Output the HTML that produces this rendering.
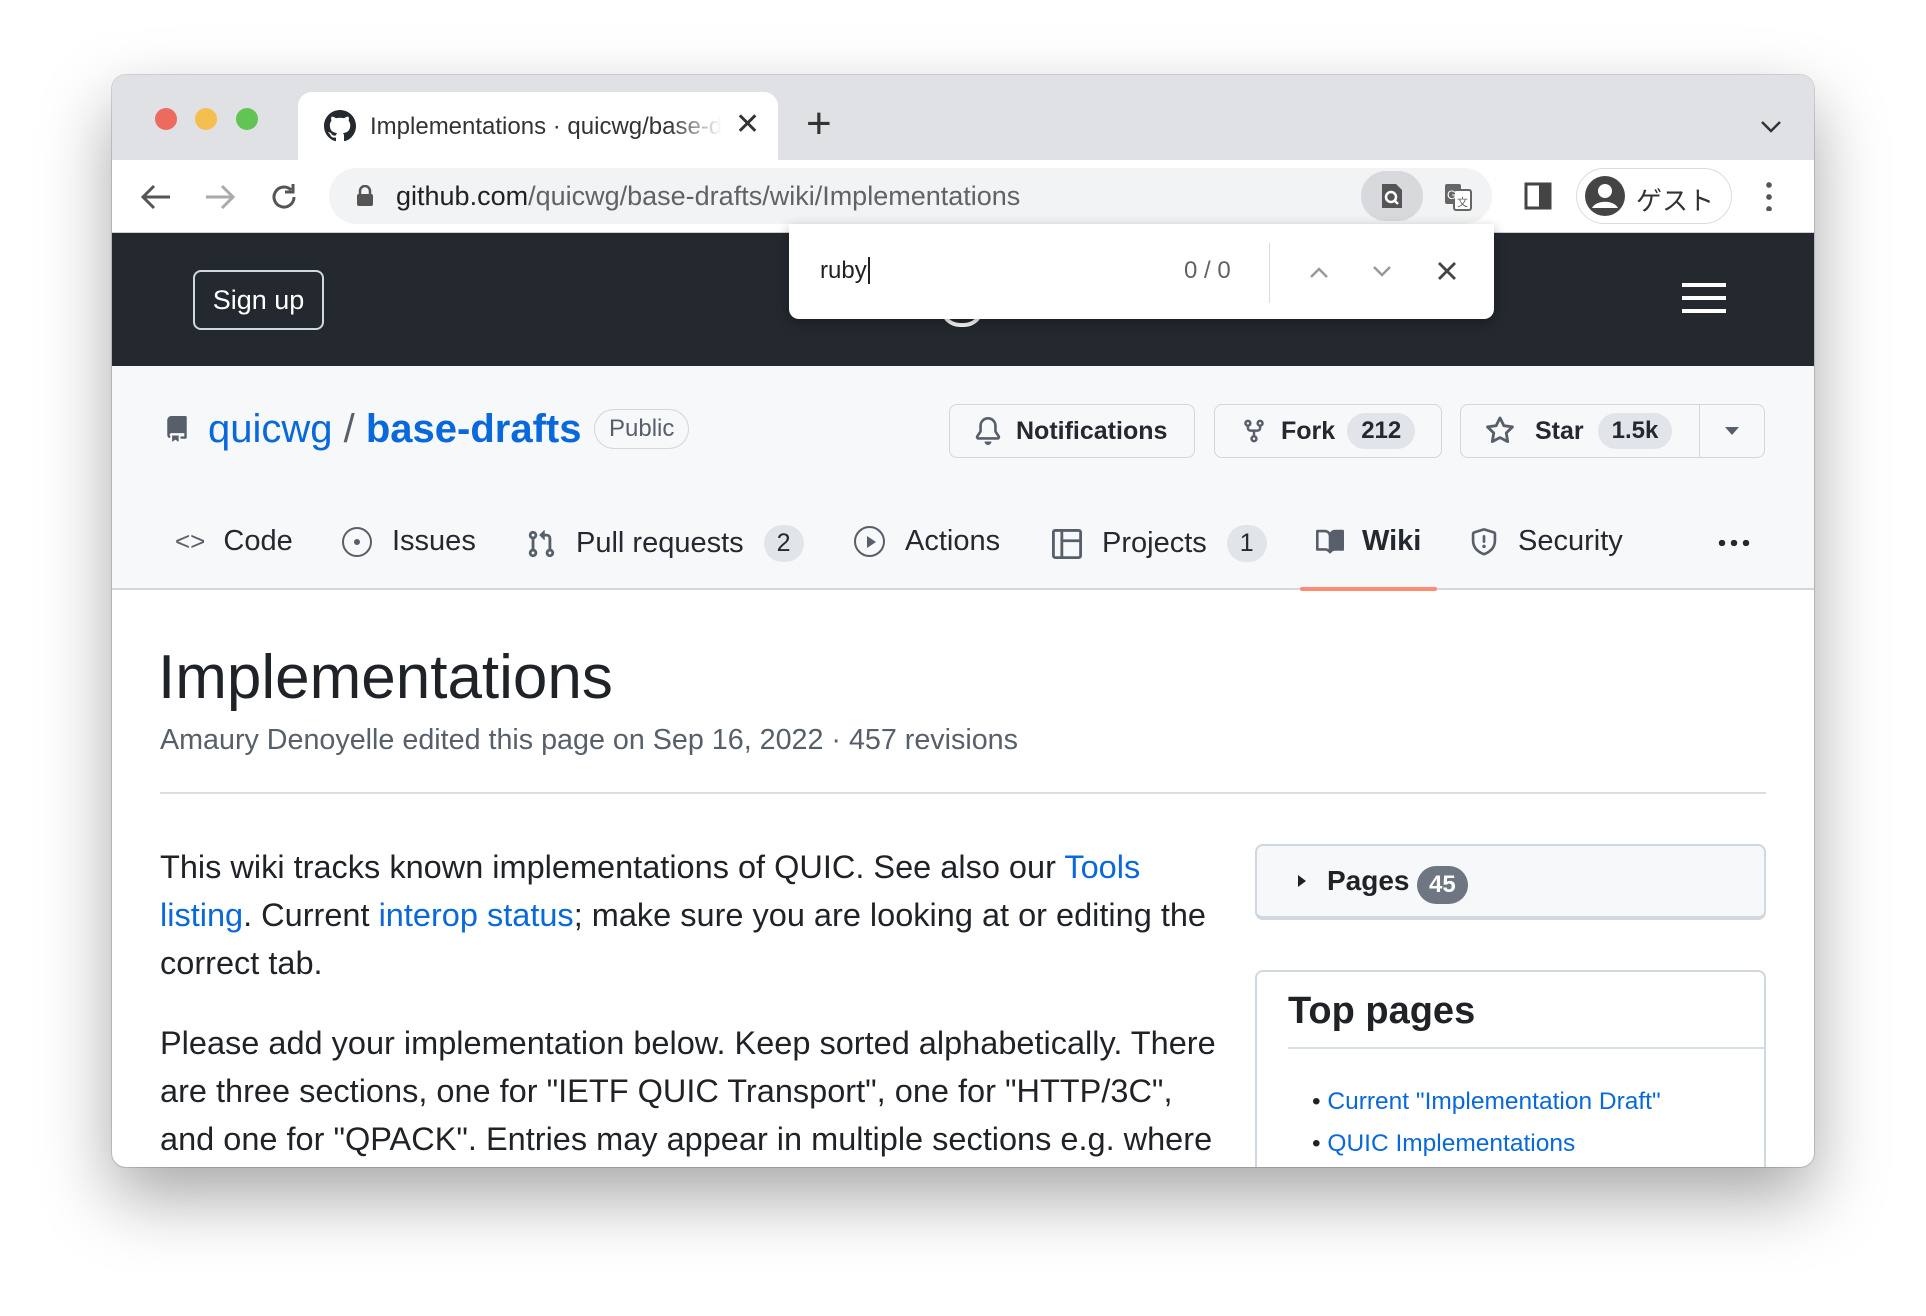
<!DOCTYPE html>
<html><head><meta charset="utf-8"><style>
*{box-sizing:border-box;margin:0;padding:0}
body{width:1926px;height:1316px;background:#fff;font-family:"Liberation Sans","Noto Sans CJK JP",sans-serif;position:relative;overflow:hidden}
.win{position:absolute;left:112px;top:75px;width:1702px;height:1092px;border-radius:14px;overflow:hidden;background:#fff;box-shadow:0 30px 70px rgba(0,0,0,.35),0 0 0 1px rgba(0,0,0,.15)}
.abs{position:absolute}
.tabbar{left:0;top:0;width:1702px;height:85px;background:#dfe1e5}
.tab{left:186px;top:17px;width:480px;height:68px;background:#fff;border-radius:14px 14px 0 0}
.light{width:22px;height:22px;border-radius:50%;top:33px}
.toolbar{left:0;top:85px;width:1702px;height:73px;background:#fff;border-bottom:1px solid #d0d0d0}
.url{left:217px;top:93px;width:1163px;height:56px;border-radius:28px;background:#f1f3f4}
.hdr{left:0;top:158px;width:1702px;height:133px;background:#24292f}
.repo{left:0;top:291px;width:1702px;height:224px;background:#f6f8fa;border-bottom:2px solid #d0d7de}
.btn{top:329px;height:54px;border:1px solid #d0d7de;border-radius:8px;background:#f6f8fa;font-size:25px;color:#24292f;display:flex;align-items:center;font-weight:bold}
.cnt{background:#e1e4e8;border-radius:20px;padding:4px 14px;font-size:24px}
.nav{top:450px;font-size:29px;color:#24292f;display:flex;align-items:center}
.ic{position:absolute}
a{color:#0969da;text-decoration:none}
.p{left:48px;width:1058px;font-size:32.5px;line-height:48px;color:#1f2328}
</style></head><body>
<div class="win">
 <div class="abs tabbar"></div>
 <div class="abs light" style="left:43px;background:#ed6a5e"></div>
 <div class="abs light" style="left:83px;background:#f5bf4f"></div>
 <div class="abs light" style="left:124px;background:#61c554"></div>
 <div class="abs tab"></div>
 <svg class="ic" style="left:212px;top:35px" width="32" height="32" viewBox="0 0 16 16"><path fill="#24292f" d="M8 0C3.58 0 0 3.580 0 8c0 3.54 2.29 6.53 5.47 7.59.4.07.55-.17.55-.38 0-.19-.01-.82-.01-1.49-2.01.37-2.53-.49-2.690-.94-.09-.23-.48-.94-.82-1.130-.28-.15-.68-.52-.01-.53.63-.01 1.08.58 1.23.82.72 1.21 1.87.87 2.33.66.07-.52.28-.87.51-1.07-1.78-.2-3.64-.89-3.64-3.95 0-.87.31-1.59.82-2.15-.08-.2-.36-1.02.08-2.12 0 0 .67-.21 2.2.82.64-.18 1.32-.27 2-.27.68 0 1.36.09 2 .27 1.53-1.04 2.2-.82 2.2-.82.44 1.1.16 1.92.08 2.12.51.56.82 1.27.82 2.15 0 3.07-1.87 3.75-3.65 3.95.29.25.54.73.54 1.48 0 1.07-.01 1.93-.01 2.2 0 .21.15.46.55.38A8.013 8.013 0 0016 8c0-4.42-3.58-8-8-8z"/></svg>
 <div class="abs" style="left:258px;top:38px;font-size:24px;color:#333;width:352px;white-space:nowrap;overflow:hidden;-webkit-mask-image:linear-gradient(90deg,#000 85%,transparent)">Implementations · quicwg/base-drafts</div>
 <div class="abs" style="left:623px;top:32px;font-size:30px;color:#333">✕</div>
 <div class="abs" style="left:694px;top:24px;font-size:44px;color:#333;font-weight:300">+</div>
 <svg class="ic" style="left:1648px;top:45px" width="22" height="14" viewBox="0 0 22 14"><path d="M2 2l9 9 9-9" stroke="#333" stroke-width="2.5" fill="none"/></svg>
 <div class="abs toolbar"></div>
 <svg class="ic" style="left:28px;top:108px" width="32" height="28" viewBox="0 0 32 28"><path d="M30 14H4M14 3L3 14l11 11" stroke="#555" stroke-width="3" fill="none"/></svg>
 <svg class="ic" style="left:92px;top:108px" width="32" height="28" viewBox="0 0 32 28"><path d="M2 14h26M18 3l11 11-11 11" stroke="#aaa" stroke-width="3" fill="none"/></svg>
 <svg class="ic" style="left:156px;top:106px" width="32" height="32" viewBox="0 0 32 32"><path d="M26 16a10 10 0 1 1-3-7.1" stroke="#555" stroke-width="3" fill="none"/><path d="M25 3v8h-8" stroke="#555" stroke-width="3" fill="none"/></svg>
 <div class="abs url"></div>
 <svg class="ic" style="left:244px;top:110px" width="18" height="22" viewBox="0 0 18 22"><rect x="1" y="9" width="16" height="12" rx="2" fill="#555"/><path d="M4 9V6a5 5 0 0 1 10 0v3" stroke="#555" stroke-width="2.5" fill="none"/></svg>
 <div class="abs" style="left:284px;top:106px;font-size:27px;color:#202124">github.com<span style="color:#5f6368">/quicwg/base-drafts/wiki/Implementations</span></div>
 <div class="abs" style="left:1249px;top:96px;width:62px;height:50px;border-radius:25px;background:#d7d9dc"></div>
 <svg class="ic" style="left:1268px;top:108px" width="24" height="26" viewBox="0 0 24 26"><path d="M2 1h14l6 6v18H2z" fill="#555"/><circle cx="11" cy="14" r="5" stroke="#fff" stroke-width="2.5" fill="none"/><path d="M14 17l4 4" stroke="#fff" stroke-width="2.5"/></svg>
 <svg class="ic" style="left:1332px;top:108px" width="28" height="28" viewBox="0 0 28 28"><rect x="1" y="1" width="16" height="20" rx="2" fill="#666"/><rect x="10" y="7" width="17" height="20" rx="2" fill="#fff" stroke="#666" stroke-width="2"/><text x="3" y="16" font-size="12" fill="#fff" font-family="Liberation Sans">G</text><text x="13" y="23" font-size="11" fill="#666">文</text></svg>
 <svg class="ic" style="left:1412px;top:107px" width="28" height="28" viewBox="0 0 28 28"><rect x="2" y="2" width="24" height="24" stroke="#444" stroke-width="3" fill="none"/><rect x="15" y="2" width="11" height="24" fill="#444"/></svg>
 <div class="abs" style="left:1464px;top:93px;width:156px;height:56px;border-radius:28px;border:1px solid #dadce0;background:#fff"></div>
 <svg class="ic" style="left:1472px;top:100px" width="42" height="42" viewBox="0 0 42 42"><circle cx="21" cy="21" r="20" fill="#444"/><circle cx="21" cy="16" r="7" fill="#fff"/><path d="M8 33a14 10 0 0 1 26 0" fill="#fff"/></svg>
 <div class="abs" style="left:1524px;top:106px;font-size:26px;color:#333">ゲスト</div>
 <div class="abs" style="left:1654px;top:104px;width:6px;height:32px;background:radial-gradient(circle,#555 2.6px,transparent 3px) 0 0/6px 12px"></div>

 <div class="abs hdr"></div>
 <div class="abs" style="left:81px;top:195px;width:131px;height:60px;border:2px solid #d0d7de;border-radius:8px;color:#fff;font-size:27px;display:flex;align-items:center;justify-content:center">Sign up</div>
 <div class="abs" style="left:1570px;top:208px;width:44px;height:4px;background:#fff;box-shadow:0 13px 0 #fff,0 26px 0 #fff"></div>
 <div class="abs" style="left:828px;top:232px;width:44px;height:20px;border-radius:0 0 22px 22px;border:4px solid #fff;border-top:none"></div>

 <div class="abs" style="left:677px;top:149px;width:705px;height:95px;background:#fff;border-radius:0 0 10px 10px;box-shadow:0 4px 12px rgba(0,0,0,.3)"></div>
 <div class="abs" style="left:708px;top:182px;font-size:24px;color:#202124">ruby<span style="border-left:2px solid #202124;margin-left:1px"></span></div>
 <div class="abs" style="left:1072px;top:182px;font-size:24px;color:#5f6368">0 / 0</div>
 <div class="abs" style="left:1157px;top:168px;width:1px;height:60px;background:#dadce0"></div>
 <svg class="ic" style="left:1196px;top:190px" width="22" height="14" viewBox="0 0 22 14"><path d="M3 12l8-8 8 8" stroke="#999" stroke-width="2.5" fill="none"/></svg>
 <svg class="ic" style="left:1259px;top:190px" width="22" height="14" viewBox="0 0 22 14"><path d="M3 2l8 8 8-8" stroke="#999" stroke-width="2.5" fill="none"/></svg>
 <svg class="ic" style="left:1324px;top:185px" width="22" height="22" viewBox="0 0 22 22"><path d="M3 3l16 16M19 3L3 19" stroke="#444" stroke-width="2.8"/></svg>

 <div class="abs repo"></div>
 <svg class="ic" style="left:52px;top:338px" width="26" height="32" viewBox="0 0 16 16"><path fill="#57606a" d="M2 2.5A2.5 2.5 0 014.5 0h8.75a.75.75 0 01.75.75v12.5a.75.75 0 01-.75.75h-2.5a.75.75 0 110-1.5h1.75v-2h-8a1 1 0 00-.714 1.7.75.75 0 01-1.072 1.050A2.495 2.495 0 012 11.5v-9zm10.5-1V9h-8c-.356 0-.694.074-1 .208V2.5a1 1 0 011-1h8zM5 12.25v3.25a.25.25 0 00.4.2l1.45-1.087a.25.25 0 01.3 0L8.6 15.7a.25.25 0 00.4-.2v-3.25a.25.25 0 00-.25-.25h-3.5a.25.25 0 00-.25.25z"/></svg>
 <div class="abs" style="left:96px;top:332px;font-size:40px;color:#0969da">quicwg <span style="color:#57606a">/</span> <b>base-drafts</b></div>
 <div class="abs" style="left:482px;top:334px;height:40px;padding:0 14px;border:1px solid #d0d7de;border-radius:20px;font-size:24px;color:#57606a;line-height:38px">Public</div>
 <div class="abs btn" style="left:837px;width:246px">
  <svg style="margin:0 14px 0 24px" width="28" height="30" viewBox="0 0 16 16"><path fill="#57606a" d="M8 16a2 2 0 001.985-1.75c.017-.137-.097-.25-.235-.25h-3.5c-.138 0-.252.113-.235.25A2 2 0 008 16zM3 5a5 5 0 0110 0v2.947c0 .05.015.098.042.139l1.703 2.555A1.519 1.519 0 0113.482 13H2.518a1.516 1.516 0 01-1.263-2.36l1.703-2.554A.255.255 0 003 7.947V5zm5-3.5A3.5 3.5 0 004.5 5v2.947c0 .346-.102.683-.294.97l-1.703 2.556a.017.017 0 00-.003.01l.001.006c0 .002.002.004.004.006l.006.004.007.001h10.964l.007-.001.006-.004.004-.006.001-.007a.017.017 0 00-.003-.01l-1.703-2.554a1.745 1.745 0 01-.294-.97V5A3.5 3.5 0 008 1.5z"/></svg>Notifications</div>
 <div class="abs btn" style="left:1102px;width:228px">
  <svg style="margin:0 14px 0 26px" width="26" height="30" viewBox="0 0 16 16"><path fill="#57606a" d="M5 5.372v.878c0 .414.336.75.75.75h4.5a.75.75 0 00.75-.75v-.878a2.25 2.25 0 111.5 0v.878a2.25 2.25 0 01-2.250 2.25h-1.5v2.128a2.251 2.251 0 11-1.5 0V8.5h-1.5A2.25 2.25 0 013.5 6.25v-.878a2.25 2.25 0 111.5 0zM5 3.25a.75.75 0 10-1.5 0 .75.75 0 001.5 0zm6.75.75a.75.75 0 100-1.5.75.75 0 000 1.5zm-3 8.75a.75.75 0 10-1.5 0 .75.75 0 001.5 0z"/></svg>Fork<span class="cnt" style="margin-left:12px">212</span></div>
 <div class="abs btn" style="left:1348px;width:305px">
  <svg style="margin:0 20px 0 24px" width="30" height="30" viewBox="0 0 16 16"><path fill="#57606a" d="M8 .25a.75.75 0 01.673.418l1.882 3.815 4.21.612a.75.75 0 01.416 1.279l-3.046 2.97.719 4.192a.75.75 0 01-1.088.791L8 12.347l-3.766 1.98a.75.75 0 01-1.088-.79l.72-4.194L.818 6.374a.75.75 0 01.416-1.28l4.21-.611L7.327.668A.75.75 0 018 .25zm0 2.445L6.615 5.5a.75.75 0 01-.564.41l-3.097.45 2.24 2.184a.75.75 0 01.216.664l-.528 3.084 2.769-1.456a.75.75 0 01.698 0l2.77 1.456-.53-3.084a.75.75 0 01.216-.664l2.24-2.183-3.096-.45a.75.75 0 01-.564-.41L8 2.694v.001z"/></svg>Star<span class="cnt" style="margin-left:14px">1.5k</span>
  <span style="position:absolute;left:238px;top:0;width:1px;height:52px;background:#d0d7de"></span>
  <span style="position:absolute;left:264px;top:22px;border:7px solid transparent;border-top:8px solid #57606a"></span></div>

 <div class="abs nav" style="left:63px"><span style="font-size:26px;color:#57606a;margin-right:18px">&lt;&gt;</span>Code</div>
 <div class="abs nav" style="left:230px"><span style="width:30px;height:30px;border:2.5px solid #57606a;border-radius:50%;margin-right:20px;display:inline-flex;align-items:center;justify-content:center"><i style="width:6px;height:6px;background:#57606a;border-radius:50%"></i></span>Issues</div>
 <div class="abs nav" style="left:414px"><svg style="margin-right:20px" width="30" height="32" viewBox="0 0 16 16"><path fill="#57606a" d="M1.5 3.25a2.25 2.25 0 113 2.122v5.256a2.251 2.251 0 11-1.5 0V5.372A2.25 2.25 0 011.5 3.25zm5.677-.177L9.573.677A.25.25 0 0110 .854V2.5h1A2.5 2.5 0 0113.5 5v5.628a2.251 2.251 0 11-1.5 0V5a1 1 0 00-1-1h-1v1.646a.25.25 0 01-.427.177L7.177 3.427a.25.25 0 010-.354zM3.75 2.5a.75.75 0 100 1.5.75.75 0 000-1.5zm0 9.5a.75.75 0 100 1.5.75.75 0 000-1.5zm8.25.75a.75.75 0 101.5 0 .75.75 0 00-1.5 0z"/></svg>Pull requests<span class="cnt" style="margin-left:20px;font-size:25px;padding:4px 13px">2</span></div>
 <div class="abs nav" style="left:742px"><span style="width:31px;height:31px;border:2.5px solid #57606a;border-radius:50%;margin-right:20px;display:inline-flex;align-items:center;justify-content:center;padding-left:3px"><i style="border-left:9px solid #57606a;border-top:6px solid transparent;border-bottom:6px solid transparent"></i></span>Actions</div>
 <div class="abs nav" style="left:940px"><svg style="margin-right:20px" width="30" height="30" viewBox="0 0 16 16"><path fill="#57606a" d="M1.75 0h12.5C15.216 0 16 .784 16 1.75v12.5A1.75 1.75 0 0114.25 16H1.75A1.75 1.75 0 010 14.25V1.75C0 .784.784 0 1.75 0zM1.5 1.75v12.5c0 .138.112.25.25.25H4.5V1.5H1.75a.25.25 0 00-.25.25zM6 14.5h8.25a.25.25 0 00.25-.25V7H6v7.5zm0-9h8.5V1.75a.25.25 0 00-.25-.25H6v4z"/></svg>Projects<span class="cnt" style="margin-left:20px;font-size:25px;padding:4px 13px">1</span></div>
 <div class="abs nav" style="left:1202px;font-weight:bold"><svg style="margin-right:16px" width="32" height="28" viewBox="0 0 16 16"><path fill="#57606a" d="M0 1.75A.75.75 0 01.75 1h4.253c1.227 0 2.317.59 3 1.501A3.744 3.744 0 0111.006 1h4.245a.75.75 0 01.75.75v10.5a.75.75 0 01-.75.75h-4.507a2.25 2.25 0 00-1.591.659l-.622.621a.75.75 0 01-1.06 0l-.622-.621A2.25 2.25 0 005.258 13H.75a.75.75 0 01-.75-.75V1.75zm8.755 3a2.25 2.25 0 012.25-2.25H14.5v9h-3.757c-.71 0-1.4.201-1.992.572l.004-7.322zm-1.504 7.324l.004-5.073-.002-2.253A2.25 2.25 0 005.003 2.5H1.5v9h3.757a3.75 3.75 0 011.994.574z"/></svg>Wiki</div>
 <div class="abs" style="left:1188px;top:512px;width:137px;height:4px;background:#fd8c73;border-radius:2px"></div>
 <div class="abs nav" style="left:1358px"><svg style="margin-right:20px" width="28" height="32" viewBox="0 0 16 16"><path fill="#57606a" d="M8.533.133a1.75 1.75 0 00-1.066 0l-5.25 1.68A1.75 1.75 0 001 3.48V7c0 1.566.32 3.182 1.303 4.682.983 1.498 2.585 2.813 5.032 3.855a1.7 1.7 0 001.33 0c2.447-1.042 4.049-2.357 5.032-3.855C14.68 10.182 15 8.566 15 7V3.48a1.75 1.75 0 00-1.217-1.667L8.533.133zm-.61 1.429a.25.25 0 01.153 0l5.250 1.68a.25.25 0 01.174.238V7c0 1.358-.275 2.666-1.057 3.86-.784 1.194-2.121 2.34-4.366 3.297a.2.2 0 01-.154 0c-2.245-.956-3.582-2.104-4.366-3.298C2.775 9.666 2.5 8.36 2.5 7V3.48a.25.25 0 01.174-.237l5.25-1.68zM9 10.5a1 1 0 11-2 0 1 1 0 012 0zm-.25-5.75a.75.75 0 10-1.5 0v3a.75.75 0 001.5 0v-3z"/></svg>Security</div>
 <div class="abs" style="left:1604px;top:465px;width:34px;height:6px;background:radial-gradient(circle,#24292f 3px,transparent 3.4px) 0 0/12px 6px"></div>

 <div class="abs" style="left:46px;top:568px;font-size:62px;color:#1f2328;line-height:70px">Implementations</div>
 <div class="abs" style="left:48px;top:649px;font-size:28.7px;color:#57606a">Amaury Denoyelle edited this page on Sep 16, 2022 · 457 revisions</div>
 <div class="abs" style="left:48px;top:717px;width:1606px;height:2px;background:#d8dee4"></div>
 <div class="abs p" style="top:768px">This wiki tracks known implementations of QUIC. See also our <a>Tools listing</a>. Current <a>interop status</a>; make sure you are looking at or editing the correct tab.</div>
 <div class="abs p" style="top:944px">Please add your implementation below. Keep sorted alphabetically. There are three sections, one for "IETF QUIC Transport", one for "HTTP/3C", and one for "QPACK". Entries may appear in multiple sections e.g. where</div>

 <div class="abs" style="left:1143px;top:769px;width:511px;height:76px;border:2px solid #d0d7de;border-bottom-width:4px;border-radius:8px;background:#f6f8fa"></div>
 <div class="abs" style="left:1186px;top:800px;border-left:8px solid #1f2328;border-top:6px solid transparent;border-bottom:6px solid transparent"></div>
 <div class="abs" style="left:1215px;top:790px;font-size:28px;font-weight:bold;color:#1f2328">Pages</div>
 <div class="abs" style="left:1305px;top:791px;height:38px;padding:0 12px;border-radius:19px;background:#6e7781;color:#fff;font-size:24px;font-weight:bold;line-height:38px">45</div>
 <div class="abs" style="left:1143px;top:895px;width:511px;height:260px;border:2px solid #d0d7de;border-radius:8px;background:#fff"></div>
 <div class="abs" style="left:1176px;top:915px;font-size:38px;font-weight:bold;color:#1f2328">Top pages</div>
 <div class="abs" style="left:1176px;top:972px;width:476px;height:2px;background:#d8dee4"></div>
 <div class="abs" style="left:1200px;top:1006px;font-size:24.5px;line-height:42px;color:#1f2328">• <a>Current "Implementation Draft"</a><br>• <a>QUIC Implementations</a></div>
</div>
</body></html>
